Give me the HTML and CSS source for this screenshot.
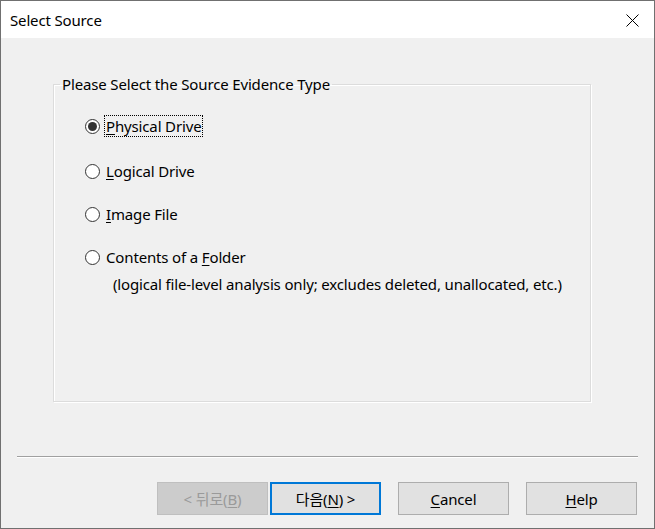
FILE: index.html
```html
<!DOCTYPE html>
<html>
<head>
<meta charset="utf-8">
<title>Select Source</title>
<link rel="stylesheet" href="styles.css">
</head>
<body>
<div class="window">
  <div class="titlebar">
    <span class="title">Select Source</span>
    <svg class="close" width="13" height="13" viewBox="0 0 13 13"><path d="M0.5 0.5 L12.5 12.5 M12.5 0.5 L0.5 12.5" stroke="#000" stroke-width="1" fill="none"/></svg>
  </div>
  <div class="content">
    <fieldset class="group">
      <legend class="legend">Please Select the Source Evidence Type</legend>
      <div class="options">
        <div class="option first"><span class="radio checked"></span><span class="label focus"><u>P</u>hysical Drive</span></div>
        <div class="option"><span class="radio"></span><span class="label"><u>L</u>ogical Drive</span></div>
        <div class="option"><span class="radio"></span><span class="label"><u>I</u>mage File</span></div>
        <div class="option"><span class="radio"></span><span class="label">Contents of a <u>F</u>older</span></div>
        <div class="note">(logical file-level analysis only; excludes deleted, unallocated, etc.)</div>
      </div>
    </fieldset>
    <div class="separator"></div>
    <div class="buttons">
      <div class="pair">
        <button class="btn disabled">&lt; 뒤로(<u>B</u>)</button>
        <button class="btn default">다음(<u>N</u>) &gt;</button>
      </div>
      <button class="btn"><u>C</u>ancel</button>
      <button class="btn"><u>H</u>elp</button>
    </div>
  </div>
</div>
</body>
</html>
```

FILE: styles.css
```css
* { box-sizing: border-box; }
html, body { margin: 0; padding: 0; }
body {
  width: 655px;
  height: 529px;
  font-family: "Noto Sans", "Noto Sans CJK KR", sans-serif;
  font-size: 15px;
  letter-spacing: -0.15px;
  color: #000;
  background: #f0f0f0;
}
.window {
  width: 655px;
  height: 529px;
  border: 1px solid #707070;
  background: #f0f0f0;
  display: flex;
  flex-direction: column;
}
.titlebar {
  height: 37px;
  background: #fff;
  display: flex;
  align-items: center;
  justify-content: space-between;
  padding: 0 15px 0 9px;
  flex: none;
}
.title { line-height: 20px; }
.close { display: block; margin-top: 1px; }
.content {
  flex: 1;
  display: flex;
  flex-direction: column;
  padding: 37px 0 0 0;
}
.group {
  margin: 0 0 0 52px;
  width: 538px;
  height: 327px;
  border: 1px solid #dcdcdc;
  box-shadow: inset 1px 1px 0 #fff, 1px 1px 0 #fff;
  padding: 0;
}
.legend {
  margin-left: 6px;
  padding: 0 2px;
  line-height: 18px;
}
.options {
  display: flex;
  flex-direction: column;
  padding: 22px 0 0 31px;
}
.option {
  display: flex;
  align-items: center;
  height: 22px;
  margin-bottom: 21px;
}
.option.first { margin-bottom: 23px; }
.option:nth-child(4) { margin-bottom: 5px; }
.radio {
  width: 15px;
  height: 15px;
  border: 1px solid #333;
  border-radius: 50%;
  background: #fff;
  display: flex;
  align-items: center;
  justify-content: center;
  margin-right: 4px;
  flex: none;
}
.radio.checked::after {
  content: "";
  width: 9px;
  height: 9px;
  border-radius: 50%;
  background: #333;
}
.label {
  line-height: 20px;
  padding: 0 1px;
  border: 1px solid transparent;
}
.label.focus { border: 1px dotted #000; }
.note {
  line-height: 22px;
  padding-left: 28px;
}
u { text-underline-offset: 2px; }
.separator {
  margin: 54px 0 0 16px;
  width: 621px;
  height: 2px;
  border-top: 1px solid #a0a0a0;
  border-bottom: 1px solid #fff;
}
.buttons {
  display: flex;
  margin: 24px 0 0 156px;
  gap: 17px;
}
.pair { display: flex; gap: 2px; }
.btn {
  width: 111px;
  height: 33px;
  font-family: "Noto Sans", "Noto Sans CJK KR", sans-serif;
  font-size: 15px;
  letter-spacing: -0.15px;
  color: #000;
  background: #e1e1e1;
  border: 1px solid #adadad;
  padding: 0;
  margin: 0;
}
.btn.disabled {
  background: #cccccc;
  border-color: #bfbfbf;
  color: #9a9a9a;
}
.btn.default {
  border: 2px solid #0078d7;
}
```
